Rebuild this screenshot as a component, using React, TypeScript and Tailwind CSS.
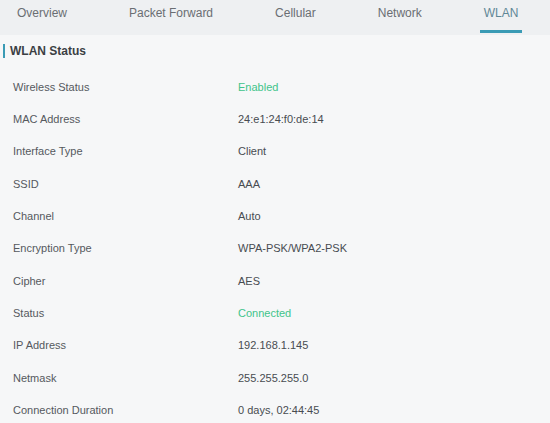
import React from "react";

const tabs = ["Overview", "Packet Forward", "Cellular", "Network", "WLAN"];

const rows: [string, string, boolean?][] = [
  ["Wireless Status", "Enabled", true],
  ["MAC Address", "24:e1:24:f0:de:14"],
  ["Interface Type", "Client"],
  ["SSID", "AAA"],
  ["Channel", "Auto"],
  ["Encryption Type", "WPA-PSK/WPA2-PSK"],
  ["Cipher", "AES"],
  ["Status", "Connected", true],
  ["IP Address", "192.168.1.145"],
  ["Netmask", "255.255.255.0"],
  ["Connection Duration", "0 days, 02:44:45"],
];

export default function App() {
  return (
    <div
      className="w-[550px] h-[423px] overflow-hidden bg-[#f6f7f8]"
      style={{ fontFamily: '"Liberation Sans", Arial, sans-serif' }}
    >
      <div className="h-[35px] bg-[#eef0f2] flex items-stretch pl-[13px] gap-[54px]">
        {tabs.map((t) => {
          const active = t === "WLAN";
          return (
            <div
              key={t}
              className={
                "relative px-[4px] pt-[5px] text-[12px] leading-[16px] " +
                (active ? "text-[#5f8796]" : "text-[#6a6e73]")
              }
            >
              <span>{t}</span>
              {active && (
                <div className="absolute left-0 right-0 bottom-[2px] h-[3px] bg-[#3a9bb5]" />
              )}
            </div>
          );
        })}
      </div>
      <div className="pt-[6px]">
        <div className="flex items-center h-[20px] pl-[3px]">
          <div className="w-[2px] h-[14px] bg-[#3a9bb5]" />
          <span className="ml-[5px] text-[12px] font-bold text-[#3b3f44]">WLAN Status</span>
        </div>
        <div className="mt-[10px]">
          {rows.map(([k, v, g]) => (
            <div key={k} className="flex items-center h-[32.3px] text-[11px]">
              <div className="w-[238px] pl-[13px] text-[#55595e]">{k}</div>
              <div className={g ? "text-[#3fc48a]" : "text-[#484c51]"}>{v}</div>
            </div>
          ))}
        </div>
      </div>
    </div>
  );
}
